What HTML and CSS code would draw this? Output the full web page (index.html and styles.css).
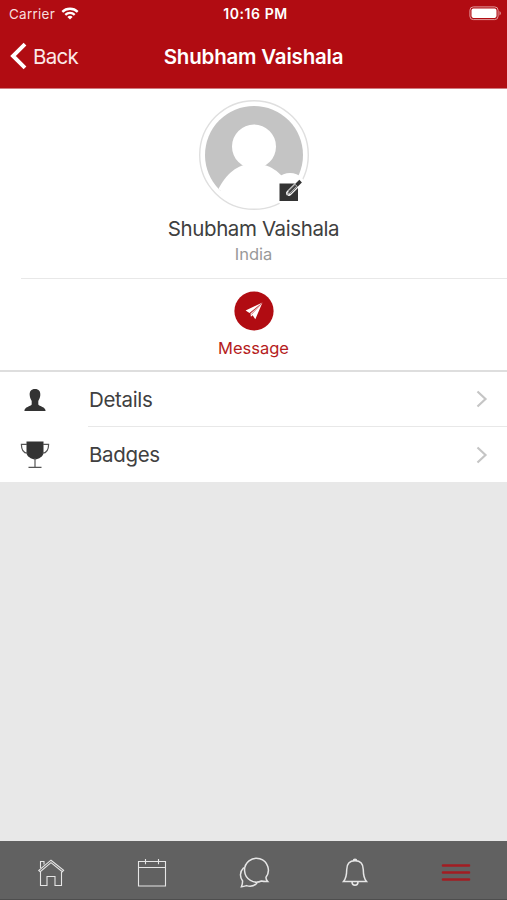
FILE: index.html
```html
<!DOCTYPE html>
<html lang="en">
<head>
<meta charset="utf-8">
<meta name="viewport" content="width=device-width, initial-scale=1">
<title>Profile</title>
<link rel="stylesheet" href="styles.css">
</head>
<body>
<div class="app">
  <header class="header">
    <div class="status">
      <div class="status-left"><span class="carrier">Carrier</span>
        <svg width="18" height="13" viewBox="0 0 17 13" fill="none" stroke="#fff" stroke-width="2.3"><path d="M.8 4.900C5 .7 12 .7 16.200 4.900"/><path d="M3.800 7.900c2.700-2.600 6.700-2.600 9.400 0"/><path d="M5.900 9.900c1.500-1.400 3.700-1.400 5.200 0l-2.600 2.600z" fill="#fff" stroke="none"/></svg>
      </div>
      <span class="time">10:16 PM</span>
      <div class="status-right"><svg width="33" height="15" viewBox="0 0 33 15"><rect x=".9" y=".9" width="28.2" height="12.7" rx="3.4" fill="none" stroke="#e29a9c" stroke-width="1"/><rect x="2.500" y="2.600" width="25" height="9.300" rx="1.800" fill="#fff"/><path d="M30.500 5c1.800.7 1.800 3.800 0 4.500z" fill="#e29a9c"/></svg></div>
    </div>
    <nav class="navbar">
      <a class="back"><svg width="17" height="28" viewBox="0 0 17 28" fill="none" stroke="#fff" stroke-width="3.900"><path d="M15 2.200 3 14l12 11.800"/></svg><span>Back</span></a>
      <h1 class="title">Shubham Vaishala</h1>
    </nav>
  </header>
  <main class="content">
    <section class="profile">
      <svg width="112" height="112" viewBox="0 0 112 112">
        <defs><clipPath id="disc"><circle cx="56" cy="56" r="49"/></clipPath></defs>
        <circle cx="56" cy="56" r="54.3" fill="#fff" stroke="#dfdfdf" stroke-width="1.4"/>
        <g clip-path="url(#disc)"><rect width="112" height="92" fill="#c4c4c4"/><circle cx="56" cy="47.500" r="22" fill="#fff"/><path d="M12 112C20 84 32 70 46 66h20c8 2 13 6 18 11l16 35z" fill="#fff"/></g>
        <circle cx="92" cy="91" r="17" fill="#fff"/>
        <path d="M81.500 84.500h18.500V102H81.500z" fill="#333"/>
        <path d="m91 94 11-11" stroke="#fff" stroke-width="5.600" stroke-linecap="round"/>
        <path d="m89 96 1.300-4.300 11-11 2.600 2.700-11 11z" fill="#333"/>
        <path d="m88.700 95.800 1.800-4 6.500-6.500 2 2-6.500 6.500z" fill="#444" stroke="#ddd" stroke-width=".9"/>
      </svg>
      <h2 class="name">Shubham Vaishala</h2>
      <p class="country">India</p>
    </section>
    <section class="actions">
      <svg width="40" height="40" viewBox="0 0 40 40"><circle cx="20" cy="20" r="19.600" fill="#b10c12"/><path d="M28.500 11.500 11.600 19.600l3.900 2.400zM28.500 11.500 16.500 22.500l.4 3.300 1.700-1.500 2.700 4z" fill="#fff"/><path d="M28.500 11.500 17.300 23.500" stroke="#b10c12" stroke-width=".6"/></svg>
      <span class="message">Message</span>
    </section>
    <ul class="menu">
      <li class="row">
        <div class="row-icon"><svg width="30" height="30" viewBox="0 0 30 30" fill="#333"><path d="M15 4.100c3.900 0 5.600 2.400 5.300 6.200-.2 2.800-1.200 4.200-2 5.700v3.500c1.200 2 7.200 2.300 7.300 6.500H4.400c.1-4.200 6.100-4.500 7.300-6.500V16c-.8-1.500-1.800-2.900-2-5.700C9.400 6.500 11.100 4.100 15 4.100z"/></svg></div>
        <div class="row-body"><span>Details</span><svg width="12" height="18" viewBox="0 0 12 18" fill="none" stroke="#c5c5c5" stroke-width="2.200"><path d="M1.500 1.500 9.500 9l-8 7.500"/></svg></div>
      </li>
      <li class="row">
        <div class="row-icon"><svg width="30" height="30" viewBox="0 0 30 30"><path d="M6.500 1.500h17v11.300c0 3.500-4.800 6.600-8.500 6.600s-8.500-3.100-8.500-6.600z" fill="#333"/><g fill="none" stroke="#555" stroke-width="1.200"><path d="M7 4.400H1.400c0 5.300 2 8.500 6.200 8.800M23 4.400h5.600c0 5.300-2 8.500-6.200 8.800M15 18v9.300M8.500 27.400h13"/></g></svg></div>
        <div class="row-body"><span>Badges</span><svg width="12" height="18" viewBox="0 0 12 18" fill="none" stroke="#c5c5c5" stroke-width="2.200"><path d="M1.500 1.500 9.500 9l-8 7.500"/></svg></div>
      </li>
    </ul>
  </main>
  <footer class="tabs">
    <div class="tab"><svg width="32" height="32" viewBox="0 0 32 32"><path d="M5.500 15v13.500H12v-9h8v9h6.500V15M5.500 11V4.500H9v3M3.800 13.400 16 3.200l12.600 10.200-1.300 1.300L16 5.600 5.200 14.700z"/></svg></div>
    <div class="tab"><svg width="32" height="32" viewBox="0 0 32 32"><path d="M2.500 4.500h27v24.500h-27zM2.500 10.500h27M9.500 2v5.300M22.500 2v5.300"/></svg></div>
    <div class="tab"><svg width="32" height="32" viewBox="0 0 32 32"><path class="thick" d="M29.700 24.500c-3 .1-4.500 0-6.300-.5A11.900 11.900 0 1 1 28 20.300c-.2 1.700.5 3 1.700 4.200zM5.800 10.500c-4.300 4.300-4.100 9.800-1.200 13.500 0 2.500-.3 3.800-1.200 5.700 2.200-.2 3.500-.6 5.100-1.100 4.300 1.200 8.800.2 11.600-4"/></svg></div>
    <div class="tab"><svg width="32" height="32" viewBox="0 0 32 32"><path class="thick" d="M16 3.700c5.300 0 8.300 3.500 8.300 9 0 5.300.5 8.500 3.200 11.800h-23c2.700-3.300 3.200-6.500 3.200-11.800 0-5.500 3-9 8.300-9zM13 25c0 4.300 6 4.300 6 0"/><path d="M14.300 3.500c0-2 3.400-2 3.400 0z" fill="#eee"/></svg></div>
    <div class="tab active"><svg width="32" height="32" viewBox="0 0 32 32"><path d="M3 8.500h26M3 15.500h26M3 22.500h26"/></svg></div>
  </footer>
</div>
</body>
</html>
```
FILE: styles.css
```css
* { box-sizing: border-box; }
body, h1, h2, p, ul { margin: 0; padding: 0; }
body { font-family: Inter, "Liberation Sans", sans-serif; color: #404040; background: #e8e8e8; }
svg { display: block; flex: none; }
.app { display: flex; flex-direction: column; height: 900px; width: 507px; overflow: hidden; }
.header { height: 89px; background: #b10c12; color: #fff; border-bottom: 1px solid #d17b80; }
.status { display: grid; grid-template-columns: 1fr auto 1fr; align-items: center; height: 27px; padding: 0 5px 0 9px; }
.status-left { display: flex; align-items: center; gap: 6px; }
.status-right { display: flex; justify-content: flex-end; }
.carrier { font-size: 13.500px; letter-spacing: .25px; color: #f7dede; }
.time { font-size: 14px; font-weight: 600; letter-spacing: .55px; }
.navbar { display: grid; grid-template-columns: 1fr auto 1fr; align-items: center; height: 58px; padding: 0 10px; }
.back { display: flex; align-items: center; gap: 6px; font-size: 20.500px; letter-spacing: -.7px; color: #fbe9e8; }
.title { font-size: 20.500px; font-weight: 600; letter-spacing: -.2px; }
.content { flex: 1; }
.profile { display: flex; flex-direction: column; align-items: center; height: 189px; padding-top: 10px; background: #fff; }
.name { margin-top: 5px; font-size: 20.500px; line-height: 25px; font-weight: 400; letter-spacing: -.4px; }
.country { margin-top: 3px; font-size: 16.500px; line-height: 20px; color: #999; }
.actions { display: flex; flex-direction: column; align-items: center; height: 94px; padding-top: 13px; background: linear-gradient(#e8e8e8, #e8e8e8) 21px 0 / 100% 1px no-repeat #fff; border-bottom: 2px solid #dedede; }
.message { margin-top: 7px; font-size: 16.500px; line-height: 20px; color: #b51b20; }
.menu { list-style: none; background: #fff; }
.row { display: flex; height: 55px; }
.row-icon { display: flex; align-items: center; width: 88px; padding-left: 20px; }
.row-body { flex: 1; display: flex; align-items: center; justify-content: space-between; padding: 0 19px 0 1px; font-size: 20.500px; letter-spacing: -.35px; }
.row:first-child .row-body { border-bottom: 1px solid #e8e8e8; }
.tabs { display: flex; height: 59px; background: #616161; border-bottom: 1px solid #4e4e4e; }
.tab { flex: 1; display: flex; align-items: center; justify-content: center; padding-top: 5px; }
.tab svg { fill: none; stroke: #e6e6e6; stroke-width: 1.100; }
.tab .thick { stroke-width: 1.500; }
.active svg { stroke: #a31c22; stroke-width: 2.600; stroke-linecap: round; }
```
